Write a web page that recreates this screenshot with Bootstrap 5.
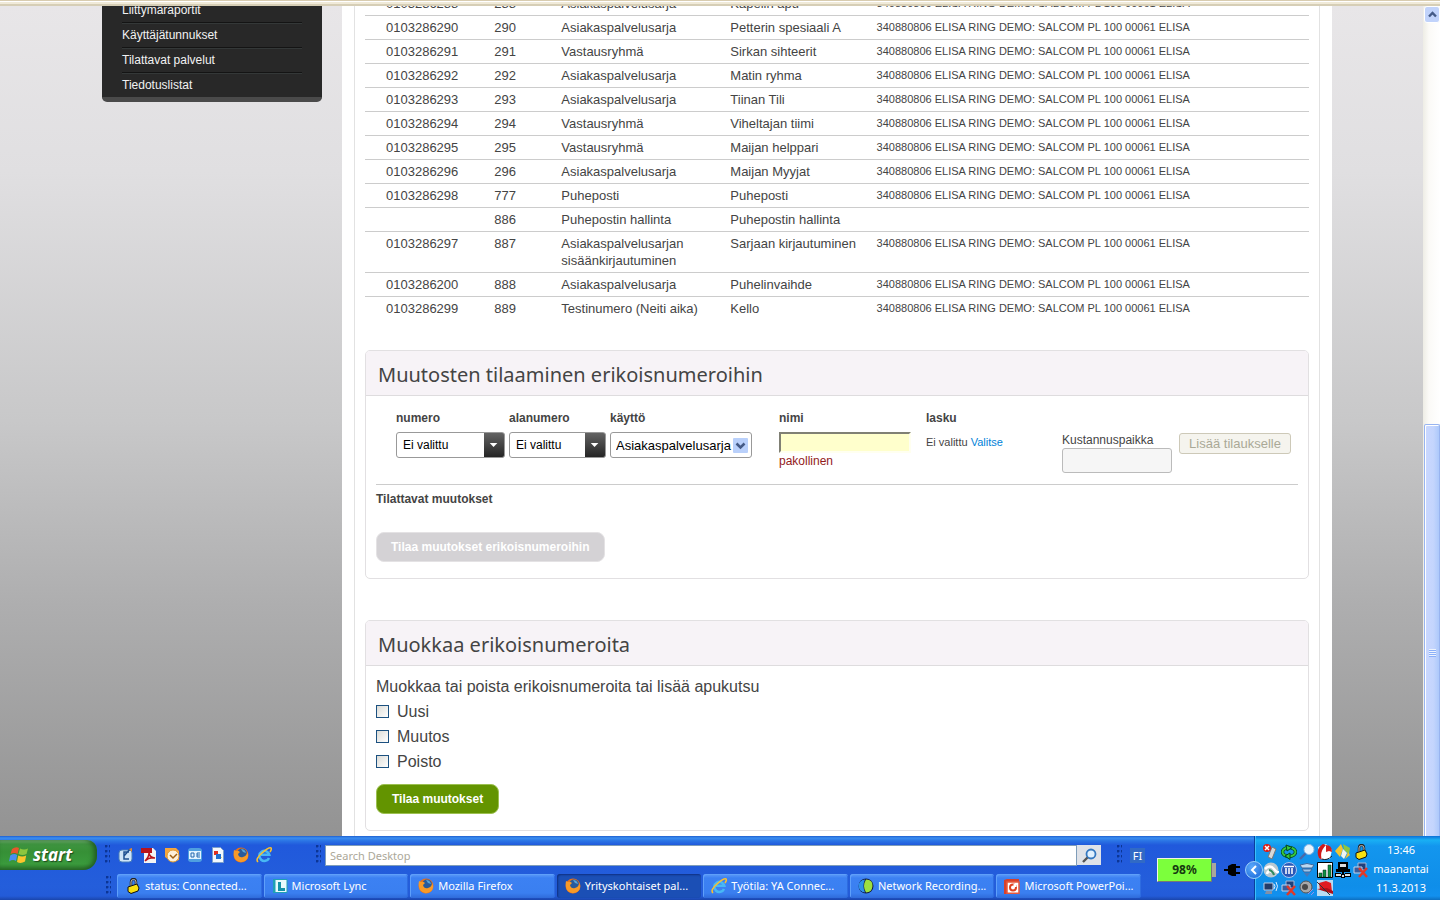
<!DOCTYPE html>
<html lang="fi">
<head>
<meta charset="utf-8">
<meta name="viewport" content="width=device-width, initial-scale=1">
<title>Yrityskohtaiset palvelut</title>
<link href="https://cdn.jsdelivr.net/npm/bootstrap@5.3.0/dist/css/bootstrap.min.css" rel="stylesheet">
<style>
body{font-family:"Liberation Sans",Arial,sans-serif;font-size:12px;line-height:17px;color:#444}
.chrome-edge{height:6px;background:linear-gradient(#d8ccb0 0 1px,#fff 1px 2px,#f0ead8 2px 4px,#d6ceb6 4px)}
.viewport{min-height:0;background:linear-gradient(#e8e6e8 0,#e0dfe1 20%,#c8c8c9 50%,#aeaeaf 72%,#939393)}
.page-wrap{width:100%;max-width:1241px;margin-top:-14px;padding-left:11px}
.side-menu{width:220px;padding:6px 20px 0;background:#282828;border-bottom:5px solid #4a4a4a;border-radius:0 0 5px 5px}
.side-menu a{display:block;color:#f2f2f2;text-decoration:none;padding:4px 0 3px;border-bottom:1px solid #141414}
.side-menu li+li a{box-shadow:inset 0 1px #343838}
.side-menu li:last-child a{border-color:#282828;padding-bottom:2px}
.sheet{margin-left:20px;padding:0 12px;background:#fff}
.sheet-inner{border:solid #e2e2e2;border-width:0 1px;padding:0 10px 10px}
.numbers{font-size:13px;line-height:17px;color:#444;table-layout:fixed;margin-bottom:29px;--bs-table-color:#444;--bs-table-bg:#fff}
.numbers td{padding:3px 0;border-bottom:1px solid #ccc}
.numbers tr:last-child td{border-color:transparent}
.numbers td:first-child{padding-left:21px}
.numbers td:last-child{font-size:11px}
.panel{border:1px solid #e2e0e2;border-radius:5px}
.panel h2{font-family:"Noto Sans","Open Sans",sans-serif;font-size:20px;font-weight:400;line-height:28px;margin:0;padding:10px 12px 6px;background:#f7f3f7;border-bottom:1px solid #dedcde;border-radius:4px 4px 0 0;color:#444}
.panel-content{padding:0 10px 16px}
.panel-edit{margin-top:41px}
.order-grid{display:grid;grid-template-columns:113fr 101fr 169fr 147fr 136fr 117fr 119fr;padding:14px 0 10px 20px;border-bottom:1px solid #ccc;height:89px}
.order-grid .head{height:22px;font-size:12px;line-height:17px;font-weight:700;display:block}
.order-title{padding-top:6px}
.pick{appearance:none;height:26px;border:1px solid #999;border-radius:3px;padding:0 6px;font-size:12px;color:#000;background:#fff}
.pick-dark{background:url("data:image/svg+xml,%3Csvg xmlns='http://www.w3.org/2000/svg' width='22' height='26'%3E%3ClinearGradient id='a' x2='0' y2='1'%3E%3Cstop stop-color='%23666'/%3E%3Cstop offset='1' stop-color='%23222'/%3E%3C/linearGradient%3E%3Cpath fill='url(%23a)' d='M0 0h22v26H0z'/%3E%3Cpath fill='%23fff' d='M6 11h8l-4 4z'/%3E%3C/svg%3E") right center/21px 26px no-repeat #fff;background-origin:border-box}
.pick-xp{background:url("data:image/svg+xml,%3Csvg xmlns='http://www.w3.org/2000/svg' width='15' height='15'%3E%3Crect width='15' height='15' rx='1' fill='%23b9d0fb'/%3E%3Cpath d='M3.500 5.500l4 4 4-4' fill='none' stroke='%23445a86' stroke-width='2.500'/%3E%3C/svg%3E") right 3px center no-repeat #fff;padding:0 5px;font-size:13px}
.w-num{width:109px}.w-ext{width:97px}.w-use{width:142px}
.name-box{width:132px;height:21px;background:#ffc;border:2px solid;border-color:#808074 #fffff0 #fffff0 #808074;padding:0}
.err{color:#921b1b}
.bill{font-size:11px;line-height:20px}
.bill a{color:#0082d8;text-decoration:none}
.cost-label{display:block;line-height:15px}
.cost-box{width:110px;height:25px;border:1px solid #bbb;border-radius:3px;background:#f6f6f6;display:block}
.add-btn{width:112px;height:21px;padding:0;font-size:13px;line-height:17px;border:1px solid #cdc9b8;border-radius:3px;background:#f5f4ee;color:#aaa997}
.push-down{margin-top:23px}
.cta{height:30px;padding:0 14px;font-size:12px;font-weight:700;line-height:28px;color:#fff;border-radius:8px}
.cta-off,.cta-off:disabled{background:#d4d2d5;border:1px solid #e4e2e4;color:#fff;opacity:1}
.cta-go{background:#639400;border:1px solid #9cc050;padding:0 15px}
.edit-copy{font-size:16px;line-height:25px;padding:8px 0 10px}
.edit-copy label{display:flex;align-items:center;gap:8px}
.tick{appearance:none;width:13px;height:13px;margin:0;border:1px solid #1c5180;background:linear-gradient(135deg,#dcdcd7,#fff)}
.tick:checked{background:#1c5180}
.scroll-rail{width:17px;background:linear-gradient(90deg,#eeede5,#fbfaf7 6px,#fff);padding-left:1px}
.rail-btn{height:17px;border:1px solid #fff;border-radius:3px;background:#c1d3fb}
.rail-gap{flex:401}
.rail-thumb{flex:412;border:1px solid #98b4f0;border-width:1px 1px 0;box-shadow:inset 1px 1px #fff;border-radius:2px 2px 0 0;background:linear-gradient(90deg,#c9d7ff,#c4d5fd 60%,#adc9fb)}
.rail-grip{width:7px;height:8px;margin-top:46px;background:repeating-linear-gradient(#eef4fe 0 1px,#8cb0f8 1px 2px)}
/* taskbar */
.taskbar{height:64px;font-family:"Noto Sans","Open Sans",sans-serif;font-size:11px;line-height:16px;color:#fff;background:linear-gradient(#1f5fcf 0,#3a8df0 2px,#2a73e4 5px,#2059dc 9px,#245edb 50px,#235bd8 60px,#1a45ac)}
.bar-top{height:30px}
.start{width:97px;height:30px;border:0;border-radius:0 10px 14px 0;padding:0 0 1px 9px;color:#fff;background:linear-gradient(#7fbd7f 0,#3f9440 4px,#369036 12px,#3a9a3c 24px,#2b722c);box-shadow:inset -3px 0 5px #205a22;font-size:17px;font-weight:700;font-style:italic;text-shadow:1px 1px 1px #1c4a1c}
.grip{width:5px;height:20px;flex:none;background:radial-gradient(circle at 1px 1px,#0c3595 1px,transparent 2px) 0 0/4px 5px}
.ico{width:16px;height:16px;flex:none}
.quick{gap:7px;width:198px;margin-left:8px}
.desk-search{height:21px;border:1px solid #7f9db9;background:#fff;padding:0 4px;color:#444;font-size:11px}
.desk-search::placeholder{color:#aca899;opacity:1}
.find-btn{width:24px;height:20px;border:0;padding:0;background:#dfe2e8}
.lang{width:15px;height:15px;background:#316ac5;text-align:center;line-height:15px}
.task-row{padding-left:106px}
.tasks{gap:2px;margin-left:6px}
.task{flex:1 1 0;min-width:0;height:24px;border:0;border-radius:3px;padding:0 8px;color:#fff;font-size:11px;white-space:nowrap;background:linear-gradient(#5e9cf8,#3c81f3 4px,#3a7ff0 19px,#2f6bda);box-shadow:inset 1px 1px #5fa0fa,inset -1px 0 #2e6ce0}
.task.on{background:#1b4fb5;box-shadow:inset 1px 1px 2px #0e2f80}
.power{width:109px}
.battery{width:55px;height:24px;background:#7cff3c;border:1px solid #f4f4e4;border-right-color:#777;border-bottom-color:#777;color:#163a10;font-weight:700;font-size:12px;line-height:22px;text-align:center}
.nub{width:4px;height:14px;background:#aaa89a}
.tray{width:186px;background:linear-gradient(#0c70d8 0,#19b0f4 4px,#1396ee 10px,#0f8ee9 50px,#1290ee 60px,#0d6fc0);border-left:1px solid #0a3f9c;box-shadow:inset 1px 0 #3cc0fa;padding:0 8px 0 8px}
.tray-icons{display:grid;grid-template-columns:repeat(6,16px);gap:2px}
.hide-icons{position:absolute;left:-10px;top:25px;width:18px;height:18px;padding:0;border:1px solid #9cd0fa;border-radius:50%;background:radial-gradient(circle at 6px 5px,#5aa8fa,#1565d8)}
.clock{line-height:19px;width:62px}
</style>
</head>
<body class="d-flex flex-column vh-100 overflow-hidden">
<svg width="0" height="0" class="d-none" aria-hidden="true">
  <symbol id="i-win" viewBox="0 0 20 20"><path fill="#e8562c" d="M3 4q4-3 7-1L8.500 9q-3-2-7 0z"/><path fill="#8cc63f" d="M11 3.500q4 2 8 0L17.500 9q-4 2-8 0z"/><path fill="#4a8ef0" d="M1.200 10.500q4-2.500 7-.5L7 16q-3-2-7 .5z"/><path fill="#fcc52c" d="M9.200 10.500q4 2 8 0L16 16.500q-4 2.500-8 .5z"/></symbol>
  <symbol id="i-desk" viewBox="0 0 16 16"><rect x="1" y="3" width="13" height="12" rx="3" fill="#cfe4f7" stroke="#4a7fb8"/><path d="M11 5H6v7h5M6 9l6-7" fill="none" stroke="#205090" stroke-width="1.500"/><path d="M11 2l3-1v4z" fill="#e08a30"/></symbol>
  <symbol id="i-pdf" viewBox="0 0 16 16"><path fill="#f4f4f4" d="M3 1h9l3 3v12H3z"/><path fill="#b8141c" d="M0 1h11v5H0z"/><path d="M4 14q4-4 4-8 1 5 6 5-6-1-10 3z" fill="none" stroke="#b8141c" stroke-width="1.500"/></symbol>
  <symbol id="i-out" viewBox="0 0 16 16"><path fill="#f7a63c" d="M1 1h11l3 3v9l-7 2-7-5z"/><circle cx="9" cy="9" r="6" fill="#fdf0d8" stroke="#e09a30"/><path d="M6 8l3 3 4-4" fill="none" stroke="#a06010" stroke-width="1.500"/></symbol>
  <symbol id="i-oe" viewBox="0 0 16 16"><rect x="1" y="1" width="14" height="14" rx="3" fill="#4f9fe0"/><path fill="#e4f3ff" d="M2 4h12v8H2z"/><path d="M4 6h3v4H4zM13 6h-3v4h3M10 8h3" fill="none" stroke="#2468b0"/></symbol>
  <symbol id="i-doc" viewBox="0 0 16 16"><path fill="#f4f8fd" stroke="#7ca0cc" d="M2.500.5h8l3 3v12h-11z"/><path fill="#e03020" d="M4 4h4v4H4z"/><path fill="#f8c020" d="M9 7l3 4H8z"/><path fill="#2070d0" d="M6 7h5v5H6z"/></symbol>
  <symbol id="i-ff" viewBox="0 0 16 16"><circle cx="8" cy="8" r="7.500" fill="#e8701a"/><circle cx="9" cy="6.500" r="5" fill="#285a9c"/><path fill="#5aa4d8" d="M8 2q4 0 5 4l-3-1z"/><path fill="#f79a28" d="M1 3l2 1q2-1 4 1L5 7q1 4 5 3 4-1 4-5 3 6-2 9-6 3-10-2-2-4-1-9z"/></symbol>
  <symbol id="i-ie" viewBox="0 0 16 16"><path d="M13 11a5 5 0 1 1 .3-3.200H5" fill="none" stroke="#48b8f4" stroke-width="2.600"/><path d="M2 15Q-1 12 6 6t9-5q1 1-1 4" fill="none" stroke="#f8c030" stroke-width="1.600"/></symbol>
  <symbol id="i-lock" viewBox="0 0 16 16"><path d="M6 8V4q0-3 2.500-3T11 4v3" fill="none" stroke="#222" stroke-width="2.500"/><path d="M6 8V4q0-2.500 2.500-2.500T11 4v3" fill="none" stroke="#bbb"/><path d="M3 9l9-3 2 4-1 3-7 2.500-3-2z" fill="#f8e010" stroke="#111"/></symbol>
  <symbol id="i-lync" viewBox="0 0 16 16"><path fill="#1fa0b4" d="M1 1h10v14H1z"/><path fill="#e8fafc" stroke="#1fa0b4" d="M3 1.500h12v13H3z"/><path fill="#1592a8" d="M6 4h3v6h4v3H6z"/></symbol>
  <symbol id="i-net" viewBox="0 0 16 16"><circle cx="8" cy="8" r="7.500" fill="#101840"/><path fill="#2c90e8" d="M7 1.500a6.500 6.500 0 0 0 0 13q-3-6.500 0-13z"/><path fill="#9ce040" d="M8 1.500q7 0 6.500 6.500T8 14.500q-4-6.500 0-13z"/></symbol>
  <symbol id="i-ppt" viewBox="0 0 16 16"><path fill="#d8402a" d="M0 2l3-1h12v3H3v12H0z"/><path fill="#fff" stroke="#e8583c" stroke-width="1.500" d="M3 4h12v11.200H3z"/><circle cx="9" cy="9.500" r="3" fill="none" stroke="#e04020" stroke-width="2"/><path fill="#fff" d="M9.500 6h3v3h-3z"/></symbol>
  <symbol id="i-mag" viewBox="0 0 16 16"><circle cx="10" cy="6" r="4.500" fill="#dff0ff" stroke="#3478c0" stroke-width="1.800"/><path d="M6.500 9.500L2 14" stroke="#555" stroke-width="2.400"/></symbol>
  <symbol id="i-glass" viewBox="0 0 16 16"><circle cx="10" cy="5.500" r="5" fill="#e8f6ff" stroke="#90b8e0"/><path d="M6.500 9.500L1 15" stroke="#4a68a8" stroke-width="2.400"/></symbol>
  <symbol id="i-plug" viewBox="0 0 16 16"><path d="M0 8h4M12 5h4M12 11h4" stroke="#000" stroke-width="2"/><path d="M4 4l4-2h4v12H8l-4-2z"/></symbol>
  <symbol id="i-usb" viewBox="0 0 16 16"><path fill="#d8d8d8" stroke="#777" d="M9 3l4 2-4 10-4-2z"/><circle cx="4" cy="4" r="4" fill="#e01c14"/><path d="M2 2l4 4M6 2L2 6" stroke="#fff" stroke-width="1.500"/></symbol>
  <symbol id="i-sync" viewBox="0 0 16 16"><ellipse cx="8" cy="8" rx="6.500" ry="4.500" fill="none" stroke="#042" stroke-width="3.500"/><ellipse cx="8" cy="8" rx="6.500" ry="4.500" fill="none" stroke="#38c83c" stroke-width="2"/><path fill="#38c83c" stroke="#042" d="M5 1l6 2.500L6 7zM9 9v6.500L4 12z"/></symbol>
  <symbol id="i-phone" viewBox="0 0 16 16"><path fill="#fff" d="M1 3l8-3 6 6-2 9H3z"/><path fill="#d01818" d="M6 0q-8 5-4 14l3 2Q2 8 9 1z"/><path fill="#d02020" d="M9 1q6 0 6 7l-3-1-3 1z"/><path d="M5 15q5 2 10-3" fill="none" stroke="#222"/></symbol>
  <symbol id="i-cube" viewBox="0 0 16 16"><path fill="#f4c430" d="M0 7l6-7 2 5-3 8z"/><path fill="#8cc63f" d="M8 0l7 4-1 6-5-4z"/><path fill="#f0f4f0" d="M8 5l4 4-3 6-3-3z"/><path fill="#f0c030" d="M13 8l2 3-5 4z"/></symbol>
  <symbol id="i-vpn" viewBox="0 0 16 16"><circle cx="8" cy="8" r="7.500" fill="#b8c8d0"/><path d="M2 7q5-5 9 0t4 2M4 12q1-5 7-1" fill="none" stroke="#fff" stroke-width="2.500"/><path d="M6 8q4 1 5 5" fill="none" stroke="#2f8a60" stroke-width="2"/></symbol>
  <symbol id="i-bank" viewBox="0 0 16 16"><circle cx="8" cy="8" r="7.500" fill="#2858b8" stroke="#a8c4f0"/><path d="M3 4.500h10M5 6v6M8 6v6M11 6v6" stroke="#fff" stroke-width="1.500"/></symbol>
  <symbol id="i-wifi" viewBox="0 0 16 16"><path fill="#bcd8f0" stroke="#3a68a0" d="M1 3q7-3 14 0l-2 3H3z"/><path fill="#9cc4ea" stroke="#3a68a0" d="M3 7h10l-2 3H5z"/><path fill="#4878b8" d="M5 11h6l-3 4z"/></symbol>
  <symbol id="i-bars" viewBox="0 0 16 16"><path fill="#fff" stroke="#000" d="M.5.500h15v15H.5z"/><path fill="#109040" stroke="#022" stroke-width=".5" d="M2 11h3v4H2zM6 8h3v7H6zM11 3h3v12h-3z"/></symbol>
  <symbol id="i-modem" viewBox="0 0 16 16"><path d="M3 0h10v7H3zM1 7h14v3H1zM7 10h2v3H7zM0 11h6v4H0zM10 11h6v4h-6zM6 12h4v4H6z"/><path fill="#ddd" d="M5 2h6v3H5zM1 12h5v2H1zM10 12h5v2h-5zM7 13h2v2H7z"/></symbol>
  <symbol id="i-pcx" viewBox="0 0 16 16"><path fill="#20407c" stroke="#a4b8d8" d="M5 1h8v7H5z"/><path fill="#385c9c" stroke="#c4d0e8" d="M1 5h8v6H1z"/><path d="M6 6l8 9M14 6l-8 9" stroke="#e03828" stroke-width="2.500"/></symbol>
  <symbol id="i-pc" viewBox="0 0 16 16"><path fill="#243c68" stroke="#bccce4" d="M1 3h9v7H1z"/><path fill="#8090a8" d="M3 11h6v3H2z"/><path d="M11 4q2 2 0 5M13 2q3 4 0 9" fill="none" stroke="#dcecff"/></symbol>
  <symbol id="i-snd" viewBox="0 0 16 16"><circle cx="7" cy="7" r="6" fill="#a8a8a8" stroke="#555"/><circle cx="6" cy="7" r="3" fill="#484848"/><path d="M9 14l5-5M12 15l3-3" stroke="#9090f0"/></symbol>
  <symbol id="i-flag" viewBox="0 0 16 16"><path fill="#b8dcf4" d="M0 0h16v16H0z"/><path fill="#e01c20" d="M2 3l7-2 5 2 1 9-6-3-6 1z"/><path fill="#b01018" d="M0 9l10-1 6 3v3z"/><path d="M0 2l13 13" stroke="#333"/></symbol>
</svg>

<div class="chrome-edge flex-shrink-0"></div>
<div class="viewport d-flex flex-fill overflow-hidden">
  <div class="flex-fill overflow-hidden">
    <div class="page-wrap d-flex mx-auto">
      <nav class="side-menu flex-shrink-0 align-self-start">
        <ul class="list-unstyled mb-0">
          <li><a href="#">Liittymäraportit</a></li>
          <li><a href="#">Käyttäjätunnukset</a></li>
          <li><a href="#">Tilattavat palvelut</a></li>
          <li><a href="#">Tiedotuslistat</a></li>
        </ul>
      </nav>
      <main class="sheet flex-fill">
        <div class="sheet-inner">
          <table class="table numbers">
            <colgroup><col style="width:13.700%"><col style="width:7.100%"><col style="width:17.900%"><col style="width:15.500%"><col></colgroup>
            <tbody>
              <tr><td>0103286288</td><td>288</td><td>Asiakaspalvelusarja</td><td>Kapelin apu</td><td>340880806 ELISA RING DEMO: SALCOM PL 100 00061 ELISA</td></tr>
              <tr><td>0103286290</td><td>290</td><td>Asiakaspalvelusarja</td><td>Petterin spesiaali A</td><td>340880806 ELISA RING DEMO: SALCOM PL 100 00061 ELISA</td></tr>
              <tr><td>0103286291</td><td>291</td><td>Vastausryhmä</td><td>Sirkan sihteerit</td><td>340880806 ELISA RING DEMO: SALCOM PL 100 00061 ELISA</td></tr>
              <tr><td>0103286292</td><td>292</td><td>Asiakaspalvelusarja</td><td>Matin ryhma</td><td>340880806 ELISA RING DEMO: SALCOM PL 100 00061 ELISA</td></tr>
              <tr><td>0103286293</td><td>293</td><td>Asiakaspalvelusarja</td><td>Tiinan Tili</td><td>340880806 ELISA RING DEMO: SALCOM PL 100 00061 ELISA</td></tr>
              <tr><td>0103286294</td><td>294</td><td>Vastausryhmä</td><td>Viheltajan tiimi</td><td>340880806 ELISA RING DEMO: SALCOM PL 100 00061 ELISA</td></tr>
              <tr><td>0103286295</td><td>295</td><td>Vastausryhmä</td><td>Maijan helppari</td><td>340880806 ELISA RING DEMO: SALCOM PL 100 00061 ELISA</td></tr>
              <tr><td>0103286296</td><td>296</td><td>Asiakaspalvelusarja</td><td>Maijan Myyjat</td><td>340880806 ELISA RING DEMO: SALCOM PL 100 00061 ELISA</td></tr>
              <tr><td>0103286298</td><td>777</td><td>Puheposti</td><td>Puheposti</td><td>340880806 ELISA RING DEMO: SALCOM PL 100 00061 ELISA</td></tr>
              <tr><td></td><td>886</td><td>Puhepostin hallinta</td><td>Puhepostin hallinta</td><td></td></tr>
              <tr><td>0103286297</td><td>887</td><td>Asiakaspalvelusarjan<br>sisäänkirjautuminen</td><td>Sarjaan kirjautuminen</td><td>340880806 ELISA RING DEMO: SALCOM PL 100 00061 ELISA</td></tr>
              <tr><td>0103286200</td><td>888</td><td>Asiakaspalvelusarja</td><td>Puhelinvaihde</td><td>340880806 ELISA RING DEMO: SALCOM PL 100 00061 ELISA</td></tr>
              <tr><td>0103286299</td><td>889</td><td>Testinumero (Neiti aika)</td><td>Kello</td><td>340880806 ELISA RING DEMO: SALCOM PL 100 00061 ELISA</td></tr>
            </tbody>
          </table>

          <section class="panel">
            <h2>Muutosten tilaaminen erikoisnumeroihin</h2>
            <div class="panel-content">
              <form class="order-grid">
                <div><label class="head" for="numero">numero</label><select id="numero" class="pick pick-dark w-num"><option>Ei valittu</option></select></div>
                <div><label class="head" for="alanumero">alanumero</label><select id="alanumero" class="pick pick-dark w-ext"><option>Ei valittu</option></select></div>
                <div><label class="head" for="kaytto">käyttö</label><select id="kaytto" class="pick pick-xp w-use"><option>Asiakaspalvelusarja</option></select></div>
                <div><label class="head" for="nimi">nimi</label><input id="nimi" type="text" class="name-box d-block"><span class="err">pakollinen</span></div>
                <div class="bill"><strong class="head">lasku</strong>Ei valittu <a href="#">Valitse</a></div>
                <div class="push-down"><label for="kustannus" class="cost-label">Kustannuspaikka</label><input id="kustannus" type="text" class="cost-box"></div>
                <div class="push-down"><button type="button" class="add-btn" disabled>Lisää tilaukselle</button></div>
              </form>
              <div class="order-title fw-bold mb-4">Tilattavat muutokset</div>
              <button type="button" class="btn cta cta-off" disabled>Tilaa muutokset erikoisnumeroihin</button>
            </div>
          </section>

          <section class="panel panel-edit">
            <h2>Muokkaa erikoisnumeroita</h2>
            <div class="panel-content">
              <div class="edit-copy">
                <div>Muokkaa tai poista erikoisnumeroita tai lisää apukutsu</div>
                <label><input type="checkbox" class="tick">Uusi</label>
                <label><input type="checkbox" class="tick">Muutos</label>
                <label><input type="checkbox" class="tick">Poisto</label>
              </div>
              <button type="button" class="btn cta cta-go">Tilaa muutokset</button>
            </div>
          </section>
        </div>
      </main>
    </div>
  </div>
  <div class="scroll-rail d-flex flex-column flex-shrink-0">
    <div class="rail-btn d-flex align-items-center justify-content-center"><svg width="9" height="7"><path d="M1 5.500L4.500 2 8 5.500" fill="none" stroke="#445a86" stroke-width="2.400"/></svg></div>
    <div class="rail-gap"></div>
    <div class="rail-thumb d-flex align-items-center justify-content-center"><div class="rail-grip"></div></div>
  </div>
</div>

<footer class="taskbar d-flex flex-shrink-0">
  <div class="flex-fill d-flex flex-column pt-1">
    <div class="bar-top d-flex align-items-center">
      <button type="button" class="start d-flex align-items-center gap-1"><svg class="flex-shrink-0" width="20" height="20"><use href="#i-win"/></svg>start</button>
      <div class="grip ms-2"></div>
      <div class="quick d-flex">
        <svg class="ico"><use href="#i-desk"/></svg><svg class="ico"><use href="#i-pdf"/></svg><svg class="ico"><use href="#i-out"/></svg><svg class="ico"><use href="#i-oe"/></svg><svg class="ico"><use href="#i-doc"/></svg><svg class="ico"><use href="#i-ff"/></svg><svg class="ico"><use href="#i-ie"/></svg>
      </div>
      <div class="grip me-1"></div>
      <input class="desk-search flex-fill" type="text" placeholder="Search Desktop" aria-label="Search Desktop">
      <button type="button" class="find-btn" aria-label="Search"><svg class="ico"><use href="#i-mag"/></svg></button>
      <div class="grip ms-3 me-2"></div>
      <div class="lang">FI</div>
    </div>
    <div class="task-row d-flex align-items-center mt-1 me-1">
      <div class="grip"></div>
      <div class="tasks d-flex flex-fill">
        <button type="button" class="task d-flex align-items-center gap-1"><svg class="ico"><use href="#i-lock"/></svg><span>status: Connected...</span></button>
        <button type="button" class="task d-flex align-items-center gap-1"><svg class="ico"><use href="#i-lync"/></svg><span>Microsoft Lync</span></button>
        <button type="button" class="task d-flex align-items-center gap-1"><svg class="ico"><use href="#i-ff"/></svg><span>Mozilla Firefox</span></button>
        <button type="button" class="task on d-flex align-items-center gap-1"><svg class="ico"><use href="#i-ff"/></svg><span>Yrityskohtaiset pal...</span></button>
        <button type="button" class="task d-flex align-items-center gap-1"><svg class="ico"><use href="#i-ie"/></svg><span>Työtila: YA Connec...</span></button>
        <button type="button" class="task d-flex align-items-center gap-1"><svg class="ico"><use href="#i-net"/></svg><span>Network Recording...</span></button>
        <button type="button" class="task d-flex align-items-center gap-1"><svg class="ico"><use href="#i-ppt"/></svg><span>Microsoft PowerPoi...</span></button>
      </div>
    </div>
  </div>
  <div class="power d-flex align-items-center ps-2 pt-1 flex-shrink-0">
    <div class="battery ms-1">98%</div><div class="nub"></div>
    <svg class="ico ms-2"><use href="#i-plug"/></svg>
  </div>
  <div class="tray position-relative d-flex align-items-center justify-content-between flex-shrink-0">
    <button type="button" class="hide-icons d-flex align-items-center justify-content-center" aria-label="Hide icons"><svg width="8" height="10"><path d="M6 1L2 5l4 4" fill="none" stroke="#fff" stroke-width="2"/></svg></button>
    <div class="tray-icons pt-1">
      <svg class="ico"><use href="#i-usb"/></svg><svg class="ico"><use href="#i-sync"/></svg><svg class="ico"><use href="#i-glass"/></svg><svg class="ico"><use href="#i-phone"/></svg><svg class="ico"><use href="#i-cube"/></svg><svg class="ico"><use href="#i-lock"/></svg>
      <svg class="ico"><use href="#i-vpn"/></svg><svg class="ico"><use href="#i-bank"/></svg><svg class="ico"><use href="#i-wifi"/></svg><svg class="ico"><use href="#i-bars"/></svg><svg class="ico"><use href="#i-modem"/></svg><svg class="ico"><use href="#i-pcx"/></svg>
      <svg class="ico"><use href="#i-pc"/></svg><svg class="ico"><use href="#i-pcx"/></svg><svg class="ico"><use href="#i-snd"/></svg><svg class="ico"><use href="#i-flag"/></svg>
    </div>
    <div class="clock text-center"><div>13:46</div><div>maanantai</div><div>11.3.2013</div></div>
  </div>
</footer>
<script src="https://cdn.jsdelivr.net/npm/bootstrap@5.3.0/dist/js/bootstrap.bundle.min.js"></script>
</body>
</html>
